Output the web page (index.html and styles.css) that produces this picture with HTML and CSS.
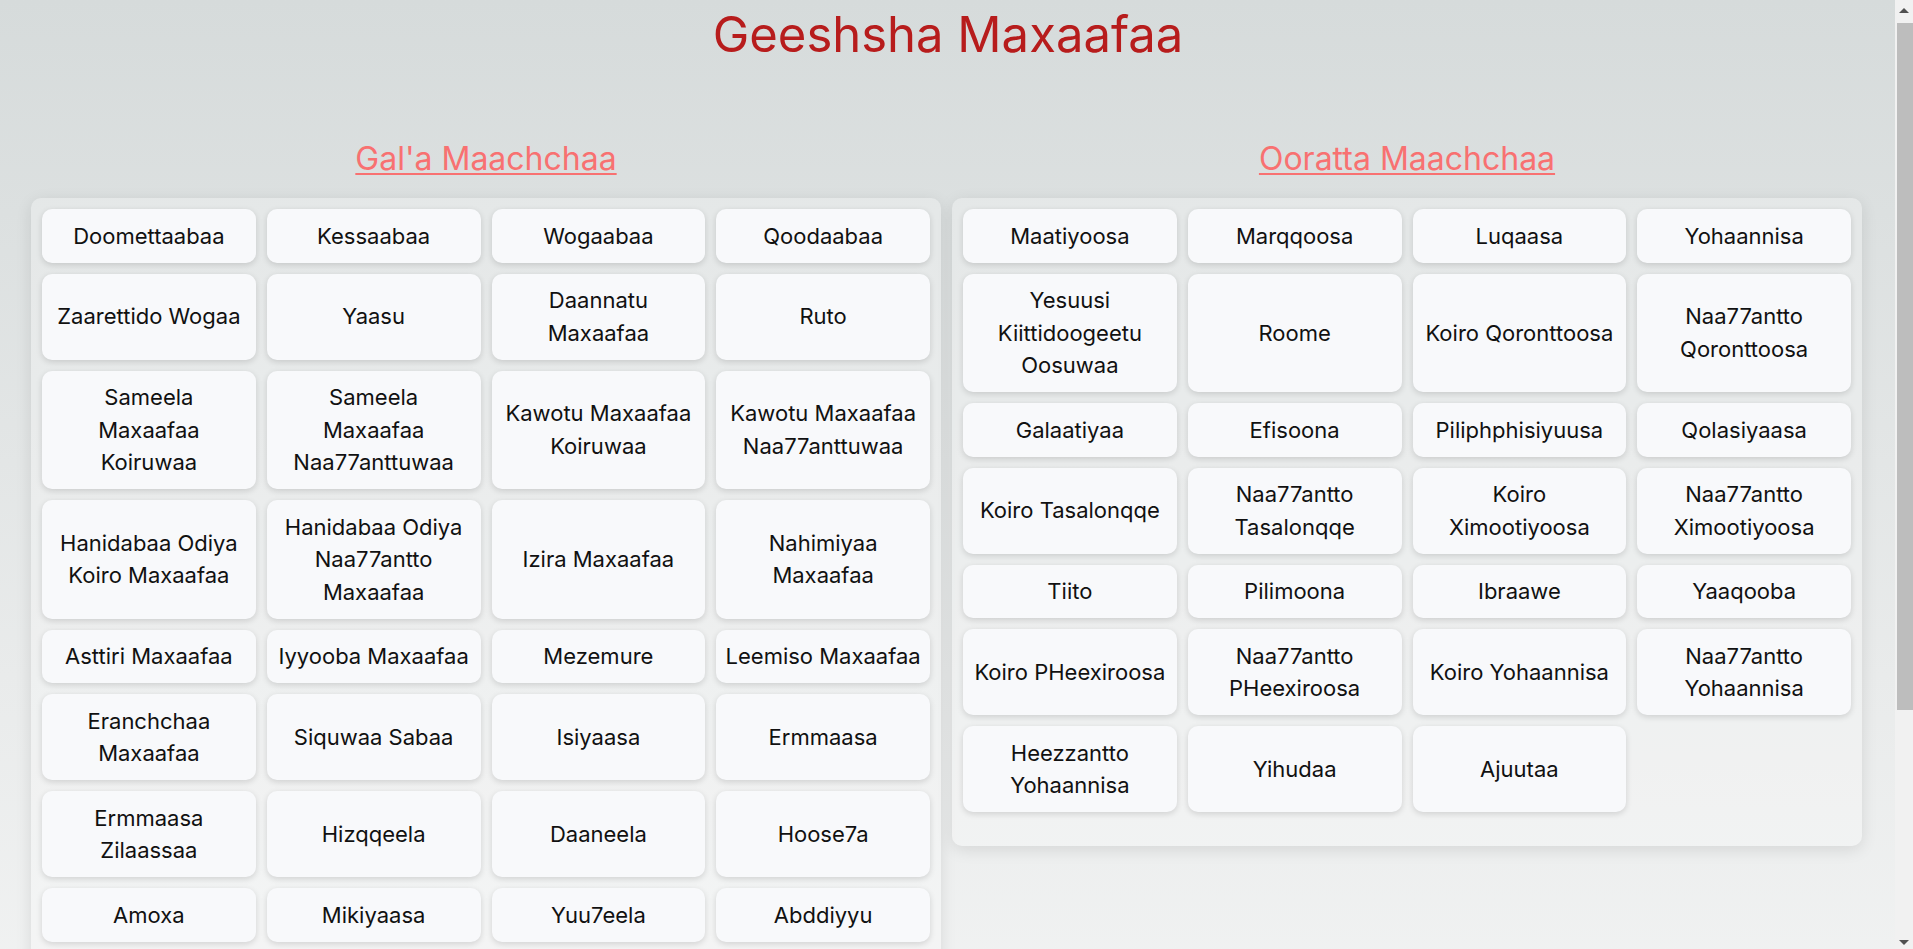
FILE: index.html
```html
<!DOCTYPE html>
<html lang="en">
<head>
    <meta charset="UTF-8">
    <meta name="viewport" content="width=device-width, initial-scale=1.0">
    <title>Geeshsha Maxaafaa</title>
    <link rel="stylesheet" href="styles.css">
</head>
<body>
    <h1 class="page-title">Geeshsha Maxaafaa</h1>
    <div class="testaments">
        <section class="testament">
            <h2><a href="#" class="testament-link">Gal'a Maachchaa</a></h2>
            <div class="book-grid">
                <a href="#" class="book">Doomettaabaa</a>
                <a href="#" class="book">Kessaabaa</a>
                <a href="#" class="book">Wogaabaa</a>
                <a href="#" class="book">Qoodaabaa</a>
                <a href="#" class="book">Zaarettido Wogaa</a>
                <a href="#" class="book">Yaasu</a>
                <a href="#" class="book">Daannatu Maxaafaa</a>
                <a href="#" class="book">Ruto</a>
                <a href="#" class="book">Sameela Maxaafaa Koiruwaa</a>
                <a href="#" class="book">Sameela Maxaafaa Naa77anttuwaa</a>
                <a href="#" class="book">Kawotu Maxaafaa Koiruwaa</a>
                <a href="#" class="book">Kawotu Maxaafaa Naa77anttuwaa</a>
                <a href="#" class="book">Hanidabaa Odiya Koiro Maxaafaa</a>
                <a href="#" class="book">Hanidabaa Odiya Naa77antto Maxaafaa</a>
                <a href="#" class="book">Izira Maxaafaa</a>
                <a href="#" class="book">Nahimiyaa Maxaafaa</a>
                <a href="#" class="book">Asttiri Maxaafaa</a>
                <a href="#" class="book">Iyyooba Maxaafaa</a>
                <a href="#" class="book">Mezemure</a>
                <a href="#" class="book">Leemiso Maxaafaa</a>
                <a href="#" class="book">Eranchchaa Maxaafaa</a>
                <a href="#" class="book">Siquwaa Sabaa</a>
                <a href="#" class="book">Isiyaasa</a>
                <a href="#" class="book">Ermmaasa</a>
                <a href="#" class="book">Ermmaasa Zilaassaa</a>
                <a href="#" class="book">Hizqqeela</a>
                <a href="#" class="book">Daaneela</a>
                <a href="#" class="book">Hoose7a</a>
                <a href="#" class="book">Amoxa</a>
                <a href="#" class="book">Mikiyaasa</a>
                <a href="#" class="book">Yuu7eela</a>
                <a href="#" class="book">Abddiyyu</a>
                <a href="#" class="book">Yoonaasa</a>
                <a href="#" class="book">Naahoome</a>
                <a href="#" class="book">Anbbaqoome</a>
                <a href="#" class="book">Sofooniyaasa</a>
                <a href="#" class="book">Hagee</a>
                <a href="#" class="book">Zakkaarriyaasa</a>
                <a href="#" class="book">Milkkiyaasa</a>
            </div>
        </section>
        <section class="testament">
            <h2><a href="#" class="testament-link">Ooratta Maachchaa</a></h2>
            <div class="book-grid">
                <a href="#" class="book">Maatiyoosa</a>
                <a href="#" class="book">Marqqoosa</a>
                <a href="#" class="book">Luqaasa</a>
                <a href="#" class="book">Yohaannisa</a>
                <a href="#" class="book">Yesuusi Kiittidoogeetu Oosuwaa</a>
                <a href="#" class="book">Roome</a>
                <a href="#" class="book">Koiro Qoronttoosa</a>
                <a href="#" class="book">Naa77antto Qoronttoosa</a>
                <a href="#" class="book">Galaatiyaa</a>
                <a href="#" class="book">Efisoona</a>
                <a href="#" class="book">Piliphphisiyuusa</a>
                <a href="#" class="book">Qolasiyaasa</a>
                <a href="#" class="book">Koiro Tasalonqqe</a>
                <a href="#" class="book">Naa77antto Tasalonqqe</a>
                <a href="#" class="book">Koiro Ximootiyoosa</a>
                <a href="#" class="book">Naa77antto Ximootiyoosa</a>
                <a href="#" class="book">Tiito</a>
                <a href="#" class="book">Pilimoona</a>
                <a href="#" class="book">Ibraawe</a>
                <a href="#" class="book">Yaaqooba</a>
                <a href="#" class="book">Koiro PHeexiroosa</a>
                <a href="#" class="book">Naa77antto PHeexiroosa</a>
                <a href="#" class="book">Koiro Yohaannisa</a>
                <a href="#" class="book">Naa77antto Yohaannisa</a>
                <a href="#" class="book">Heezzantto Yohaannisa</a>
                <a href="#" class="book">Yihudaa</a>
                <a href="#" class="book">Ajuutaa</a>
            </div>
        </section>
    </div>
    <!-- stand-in for the browser scrollbar seen in the screenshot -->
    <div class="scrollbar">
        <span class="scroll-arrow up"></span>
        <div class="scroll-thumb"></div>
        <span class="scroll-arrow down"></span>
    </div>
</body>
</html>
```

FILE: styles.css
```css
html {
    min-height: 100%;
    background: linear-gradient(to bottom, #d6dbdb 0%, #e9ebeb 60%, #f4f5f5 100%);
}
body {
    font-family: Inter, "Noto Sans", Arial, sans-serif;
    margin: 0;
    padding-bottom: 20px;
    color: #111;
}
.page-title {
    margin: 3px 17px 0 0;
    text-align: center;
    font-size: 49px;
    font-weight: 400;
    line-height: 63px;
    color: #b71c1c;
}
.testaments {
    display: grid;
    grid-template-columns: 1fr 1fr;
    gap: 11px;
    align-items: start;
    margin-top: 73px;
    padding: 0 51px 0 31px;
}
.testament h2 {
    margin: 0 0 20px;
    text-align: center;
    font-size: 32px;
    font-weight: 400;
    line-height: 39px;
}
.testament-link {
    color: #f87171;
    text-decoration: underline;
    text-decoration-thickness: 2px;
    text-underline-offset: 3px;
}
.book-grid {
    display: grid;
    grid-template-columns: repeat(4, 1fr);
    gap: 11px;
    padding: 11px 11px 34px;
    background-color: rgba(255, 255, 255, 0.25);
    border-radius: 10px;
    box-shadow: 0 4px 16px rgba(0, 0, 0, 0.1);
}
.book {
    display: flex;
    align-items: center;
    justify-content: center;
    text-align: center;
    padding: 10.5px 9px;
    font-size: 22px;
    line-height: 32.5px;
    color: #111;
    text-decoration: none;
    background-color: #f8f9fb;
    border-radius: 10px;
    box-shadow: 0 2px 6px rgba(0, 0, 0, 0.14);
}
.book:hover {
    background-color: #fff;
}
.scrollbar {
    position: fixed;
    top: 0;
    right: 0;
    bottom: 0;
    width: 18px;
    background-color: #f1f1f1;
}
.scroll-thumb {
    position: absolute;
    top: 23px;
    left: 2px;
    right: 0;
    height: 687px;
    background-color: #bdbdbd;
}
.scroll-arrow {
    position: absolute;
    left: 4px;
    width: 0;
    height: 0;
    border-left: 5px solid transparent;
    border-right: 5px solid transparent;
}
.scroll-arrow.up {
    top: 8px;
    border-bottom: 5px solid #505050;
}
.scroll-arrow.down {
    bottom: 4px;
    border-top: 5px solid #505050;
}
```
